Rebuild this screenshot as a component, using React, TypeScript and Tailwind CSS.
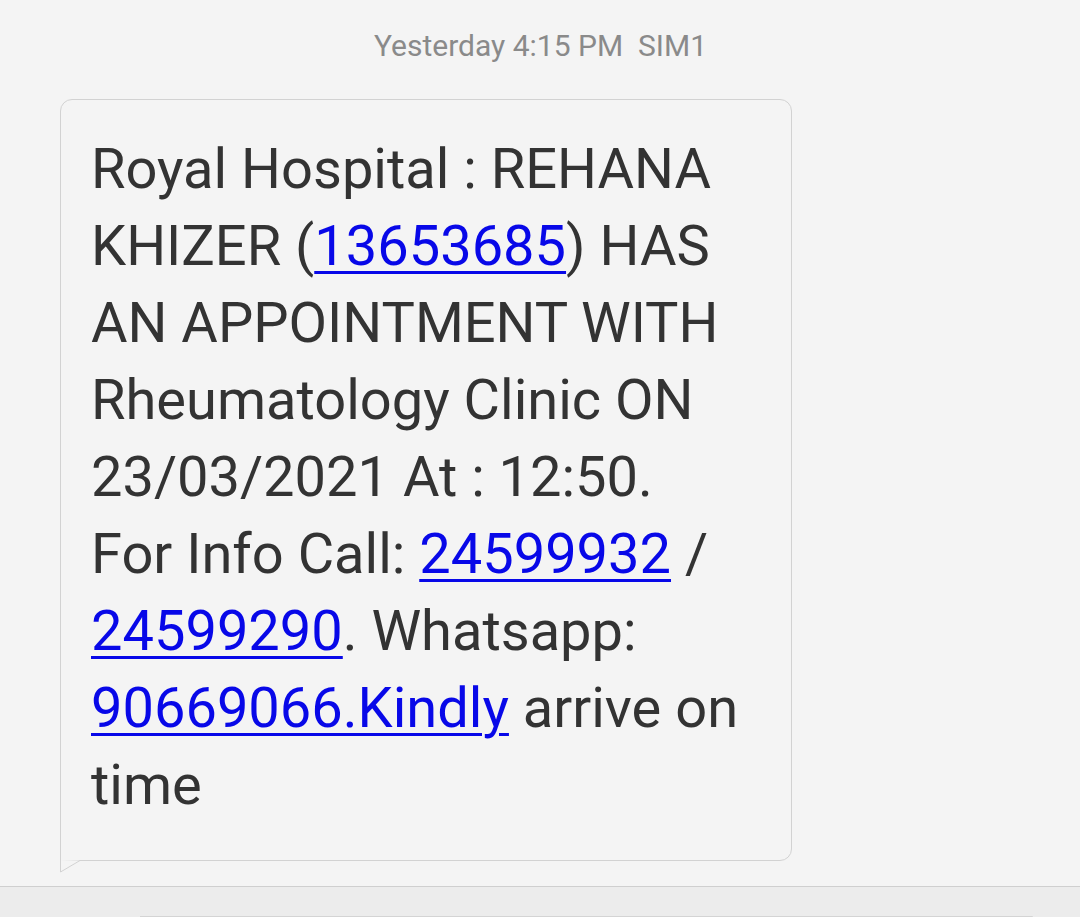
const LINK = 'text-[#0808e8] underline decoration-[3px] underline-offset-[6px]';

export default function App() {
  return (
    <div
      className="h-[917px] w-[1080px] overflow-hidden bg-[#f4f4f4] flex flex-col"
      style={{ fontFamily: 'Roboto, "Noto Sans", sans-serif' }}
    >
      <div className="flex-1">
        {/* timestamp */}
        <div className="pt-[28px] pl-[374px] text-[30px] leading-[36px] text-[#8a8a8a] whitespace-pre">
          Yesterday 4:15 PM  SIM1
        </div>

        {/* message bubble */}
        <div className="relative ml-[60px] mt-[35px] w-[732px]">
          <div className="rounded-[12px] rounded-bl-none border border-[#d2d2d2] bg-[#f4f4f4] pl-[30px] pt-[31px] pb-[36px] text-[56px] leading-[77px] text-[#333333]">
            <div className="whitespace-nowrap">Royal Hospital : REHANA</div>
            <div className="whitespace-nowrap">
              KHIZER (<span className={LINK}>13653685</span>) HAS
            </div>
            <div className="whitespace-nowrap">AN APPOINTMENT WITH</div>
            <div className="whitespace-nowrap">Rheumatology Clinic ON</div>
            <div className="whitespace-nowrap">23/03/2021 At : 12:50.</div>
            <div className="whitespace-nowrap">
              For Info Call: <span className={LINK}>24599932</span> /
            </div>
            <div className="whitespace-nowrap">
              <span className={LINK}>24599290</span>. Whatsapp:
            </div>
            <div className="whitespace-nowrap">
              <span className={LINK}>90669066.Kindly</span> arrive on
            </div>
            <div className="whitespace-nowrap">time</div>
          </div>
          {/* tail */}
          <svg className="absolute left-0 top-full -mt-px" width="24" height="13" viewBox="0 0 24 13">
            <path d="M0.5 0 L0.5 12 L20 0.5" fill="#f4f4f4" stroke="#d2d2d2" strokeWidth="1" />
          </svg>
        </div>
      </div>

      {/* bottom compose bar */}
      <div className="h-[31px] border-t border-[#cfcfcf] bg-[#ececec] flex items-end">
        <div className="ml-[140px] h-[1px] w-[893px] rounded-tr-[6px] bg-[#d4d4d4]" />
      </div>
    </div>
  );
}
